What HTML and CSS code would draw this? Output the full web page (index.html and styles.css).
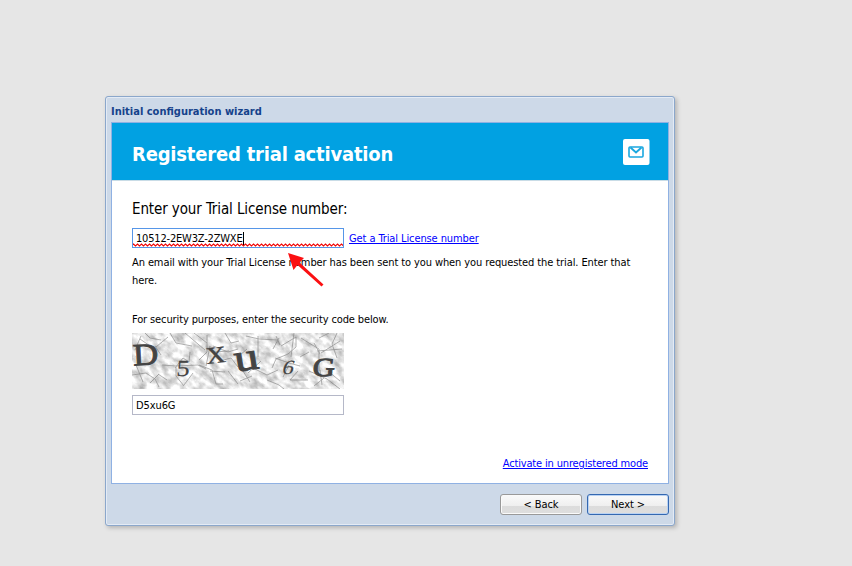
FILE: index.html
```html
<!DOCTYPE html>
<html lang="en">
<head>
<meta charset="utf-8">
<title>Initial configuration wizard</title>
<link rel="stylesheet" href="styles.css">
</head>
<body>
<main class="window">
  <h1 class="title"><span>Initial configuration wizard</span></h1>
  <section class="panel">
    <header class="banner">
      <h2><span>Registered trial activation</span></h2>
      <svg class="mail" width="28" height="28" viewBox="0 0 28 28">
        <rect x="1" y="1" width="26.5" height="26" rx="2" fill="#fff"/>
        <rect x="7" y="9" width="14" height="10" rx="1" fill="none" stroke="#1aa7df" stroke-width="1.6"/>
        <path d="M8.5 9.5 14 14.5 19.5 9.5" fill="none" stroke="#1aa7df" stroke-width="1.9"/>
      </svg>
    </header>
    <div class="content">
      <h3><span>Enter your Trial License number:</span></h3>
      <div class="license-row">
        <div class="field license"><span class="license-text">10512-2EW3Z-2ZWXE</span><i class="caret"></i>
          <svg class="wave" width="210" height="4"><defs><pattern id="zig" width="4" height="4" patternUnits="userSpaceOnUse"><path d="M-1 2.5 .5 1 2.5 3 4.5 1" fill="none" stroke="#f00000" stroke-width="1.1"/></pattern></defs><rect width="210" height="4" fill="url(#zig)"/></svg>
        </div>
        <a class="link get" href="#">Get a Trial License number</a>
      </div>
      <p class="hint"><span>An email with your Trial License number has been sent to you when you requested the trial. Enter that</span><br>here.</p>
      <p class="security"><span>For security purposes, enter the security code below.</span></p>
      <svg class="captcha" width="212" height="56" viewBox="0 0 212 56">
        <defs>
          <filter id="grain" x="0" y="0" width="100%" height="100%" color-interpolation-filters="sRGB">
            <feTurbulence type="fractalNoise" baseFrequency=".1 .16" numOctaves="4" seed="8"/>
            <feColorMatrix values=".6 0 0 0 .6  .6 0 0 0 .6  .6 0 0 0 .6  0 0 0 0 1"/>
          </filter>
        </defs>
        <g transform="rotate(38 106 28)"><rect x="-20" y="-80" width="252" height="216" filter="url(#grain)"/></g>
        <g fill="none" stroke="#777" stroke-width=".8" opacity=".7">
          <path d="M3 17l6-14M13 0l5 5 11 2M24 14l12-10M38 0l6 10 16 3M53 0l20 17M62 0l13 10M75 2v17l-8 8M78 13l-4 20M43 35l8-10 6 4 1-10M44 34v9l8 10M30 32l14 1 22-1 8 4M67 32l13 5 4 14h7M78 38l15 1M81 13l15 6 10-3M81 19l16-1M0 42l14-2 9 6 4 8M18 50l9-9M61 40l-9 12M4 32l7 17M93 0l6 10 8-2"/>
          <path d="M126 3v21M114 3l13 3 18 1M144 3l4 9M149 13l15-9M164 4v10l-8 7-12 5-4 9M147 5l-6 11M162 0l-3 24M169 5l8 5 10 6v22M185 18l25-2M182 10l6 11M189 20l19-12M177 38l18 8 13 10M158 47l8-9M158 47h18M143 25l14 5 11 3M135 47l12 5 5 4M121 35l14 7 11-5M205 0l-5 11 5 14M187 5l10-5M108 48l12-5M109 35l9 14M188 37l2 15M196 38l12 10"/>
          <path d="M8 6l13 9M29 22l-6-9M35 47l-9-6M88 28l11-3 7 9M107 23l8-7M116 40l13-12M151 44l6-12M168 24l9-5M182 53l10-8M96 38l10 13"/>
        </g>
        <g class="glyphs">
          <text transform="translate(1.5 32.5) rotate(-3) scale(1.13 1)" font-size="31" stroke-width=".9">D</text>
          <text transform="translate(44 42.5) skewX(-4) scale(1.15 1)" font-size="23" stroke-width=".2">5</text>
          <text transform="translate(75 31) rotate(-6) scale(1.15 1)" font-size="34" stroke-width=".2">x</text>
          <text transform="translate(104 39) rotate(-9) scale(1.25 1)" font-size="39" stroke-width=".9">u</text>
          <text transform="translate(149 41) skewX(-16) scale(1.15 1)" font-size="20" stroke-width=".1">6</text>
          <text transform="translate(180 42.5) skewX(-6) scale(1.18 1)" font-size="26" stroke-width="1">G</text>
        </g>
      </svg>
      <div class="field code"><span>D5xu6G</span></div>
      <a class="link unregistered" href="#">Activate in unregistered mode</a>
    </div>
  </section>
  <footer class="actions"><button class="button">&lt; Back</button><button class="button primary">Next &gt;</button></footer>
</main>
<svg class="arrow" width="38" height="36" viewBox="0 0 38 36"><path d="M1 1 17 6 12.5 10.5 36.5 32.5 34.5 34.5 10.5 13 6.5 18Z" fill="#fb1012"/></svg>
</body>
</html>
```

FILE: styles.css
```css
* { box-sizing: border-box; }
body {
  margin: 0;
  height: 566px;
  overflow: hidden;
  background: #e6e6e6;
  color: #000;
  font: 11px/18px "DejaVu Sans Condensed", "DejaVu Sans", sans-serif;
  font-stretch: condensed;
  letter-spacing: -.1px;
}
h1, h2, h3, p { margin: 0; }
span, a { white-space: nowrap; }
.window {
  width: 570px;
  height: 430px;
  margin: 96px 0 0 105px;
  padding: 0 5px;
  border: 1px solid #8ba7cb;
  border-radius: 3px;
  background: #cdd9e8;
  box-shadow: inset 0 0 0 1px #e4ebf5, 2px 2px 4px #b4b4b4;
  display: flex;
  flex-direction: column;
}
.title {
  height: 25px;
  padding-top: 6px;
  color: #15428b;
  font-size: 11px;
  line-height: 18px;
  letter-spacing: 0;
}
.panel {
  height: 362px;
  border: 1px solid #8fb1e3;
  background: #fff;
}
.banner {
  height: 58px;
  padding: 0 18px 0 20px;
  background: #01a1e2;
  border-bottom: 1px solid #c9dce6;
  color: #fff;
  display: flex;
  align-items: center;
  justify-content: space-between;
}
.banner h2 { font-size: 20px; line-height: 26px; padding-top: 5px; letter-spacing: -.2px; }
.content { padding: 16px 20px 0; height: 302px; }
.content h3 { height: 31px; font-size: 15px; line-height: 24px; font-weight: 400; letter-spacing: -.11px; }
.license-row { display: flex; gap: 5px; }
.field {
  width: 212px;
  height: 20px;
  padding: 2px 3px 0;
  border: 1px solid #b5b8c8;
  background: #fff;
  display: flex;
  align-items: center;
}
.license { position: relative; border-color: #5696e8; }
.license-text { letter-spacing: -.19px; }
.caret { width: 1px; height: 13px; margin-top: -2px; background: #000; }
.wave { position: absolute; left: 0; bottom: 0; }
.link { color: #00f; text-decoration: underline; }
.get { line-height: 22px; height: 20px; }
.hint { height: 36px; margin-top: 6px; }
.security { margin-top: 21px; height: 22px; letter-spacing: -.12px; }
.captcha { display: block; overflow: hidden; }
.glyphs { font-family: "Liberation Serif", serif; fill: #444; stroke: #444; letter-spacing: 0; }
.code { margin-top: 6px; }
.unregistered { display: block; width: max-content; margin: 40px 0 0 auto; letter-spacing: -.16px; }
.actions { display: flex; justify-content: flex-end; gap: 5px; padding-top: 10px; }
.button {
  width: 82px;
  height: 21px;
  padding: 1px 0 0;
  border: 1px solid #999;
  border-radius: 3px;
  background: linear-gradient(#f8f8f8 0 10%, #efefef 57%, #dcdcdc 58%, #dedede);
  box-shadow: inset 0 0 0 1px #fafafa;
  color: #000;
  font: inherit;
  letter-spacing: inherit;
}
.primary { border-color: #3468b1; box-shadow: inset 0 0 0 1px #b9d2f3; }
.arrow { position: absolute; left: 287px; top: 252px; }
```
